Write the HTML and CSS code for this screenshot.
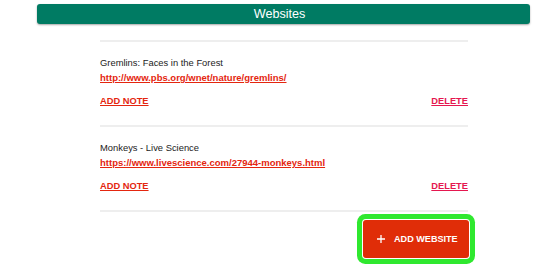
FILE: index.html
```html
<!DOCTYPE html>
<html>
<head>
<meta charset="utf-8">
<link rel="stylesheet" href="styles.css">
</head>
<body>
<div class="panel">
  <div class="panel-header">Websites</div>
  <div class="site-list">
    <div class="site">
      <div class="site-title">Gremlins: Faces in the Forest</div>
      <a class="site-link" href="#">http://www.pbs.org/wnet/nature/gremlins/</a>
      <div class="site-actions">
        <a class="act add" href="#">ADD NOTE</a>
        <a class="act del" href="#">DELETE</a>
      </div>
    </div>
    <div class="site">
      <div class="site-title">Monkeys - Live Science</div>
      <a class="site-link" href="#">https://www.livescience.com/27944-monkeys.html</a>
      <div class="site-actions">
        <a class="act add" href="#">ADD NOTE</a>
        <a class="act del" href="#">DELETE</a>
      </div>
    </div>
    <div class="footer">
      <button class="add-btn"><svg class="plus" width="8" height="8" viewBox="0 0 8 8"><path d="M4 0V8M0 4H8" stroke="#fff" stroke-width="1.3" fill="none"/></svg><span>ADD WEBSITE</span></button>
    </div>
  </div>
</div>
</body>
</html>
```

FILE: styles.css
```css
html {
  background: #fff;
}
body {
  margin: 0;
  padding: 0 0 7px;
  font-family: "Liberation Sans", Arial, sans-serif;
  color: #222;
}
.panel {
  margin: 4px 25px 0 37px;
}
.panel-header {
  height: 20px;
  line-height: 20px;
  background: #007b63;
  color: #fff;
  text-align: center;
  font-size: 12.6px;
  border-radius: 3px;
  box-shadow: 0 1px 2px rgba(0, 0, 0, 0.35);
  padding-right: 8px;
}
.site-list {
  margin: 16px 0 0 63px;
  width: 368px;
  border-top: 2px solid #eeeeee;
}
.site {
  padding: 13px 0 16px;
  border-bottom: 2px solid #eeeeee;
  display: flex;
  flex-direction: column;
  align-items: flex-start;
}
.site-title {
  font-size: 9.4px;
  line-height: 15px;
  color: #222;
}
.site-link {
  font-size: 9.5px;
  line-height: 15px;
  font-weight: bold;
  color: #e4260f;
  text-decoration: underline;
}
.site-actions {
  margin-top: 9px;
  align-self: stretch;
  display: flex;
  justify-content: space-between;
  line-height: 15px;
}
.act {
  font-size: 9.3px;
  font-weight: bold;
  text-decoration: underline;
}
.add { color: #e4260f; }
.del { color: #e5174f; }
.footer {
  display: flex;
  justify-content: flex-end;
  padding-top: 8px;
  margin-right: -1px;
}
.add-btn {
  width: 106px;
  height: 38px;
  border: none;
  border-radius: 3px;
  background: #e02d08;
  color: #fff;
  font-family: "Liberation Sans", Arial, sans-serif;
  font-weight: bold;
  font-size: 9.1px;
  display: flex;
  align-items: center;
  padding: 0 0 0 14px;
  gap: 9px;
  box-shadow: 0 0 0 1px #fff, 0 0 0 6px #2fe82f;
}
.plus { display: block; }
```
